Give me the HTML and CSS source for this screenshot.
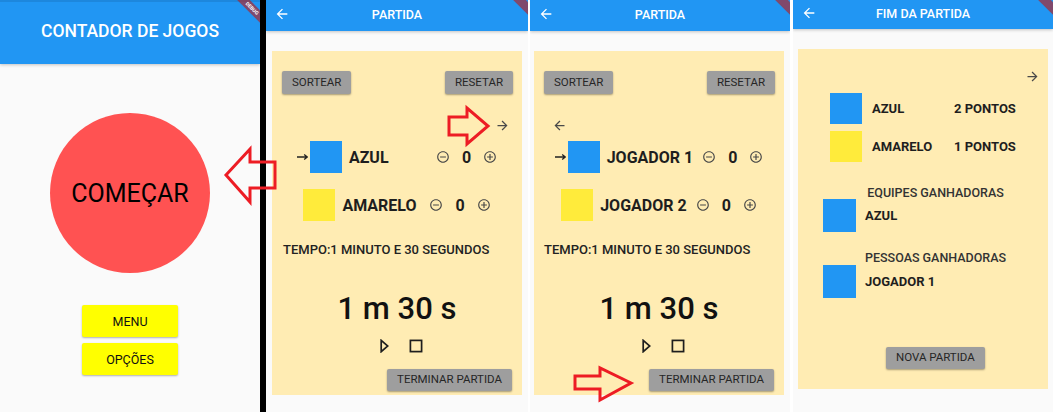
FILE: index.html
```html
<!DOCTYPE html>
<html lang="pt">
<head>
<meta charset="utf-8">
<title>Contador de Jogos</title>
<link rel="stylesheet" href="styles.css">
</head>
<body>
<div class="screen">

  <section class="phone phone-home">
    <header class="appbar appbar-home"><h1>CONTADOR DE JOGOS</h1></header>
    <div class="debug debug-wide">DEBUG</div>
    <main class="home-body">
      <button class="start">COMEÇAR</button>
      <div class="menu-btns">
        <button class="yellow-btn">MENU</button>
        <button class="yellow-btn">OPÇÕES</button>
      </div>
    </main>
  </section>

  <div class="divider"></div>

  <section class="phone phone-a">
    <header class="appbar">
      <svg class="back" viewBox="0 0 24 24" width="16" height="16"><path fill="#fff" d="M20 11H7.83l5.59-5.59L12 4l-8 8 8 8 1.41-1.41L7.83 13H20v-2z"/></svg>
      <h1>PARTIDA</h1>
    </header>
    <div class="debug"></div>
    <div class="card">
      <div class="btn-row"><button class="gray-btn">SORTEAR</button><button class="gray-btn">RESETAR</button></div>
      <div class="turn-row right"><svg viewBox="0 0 24 24" width="15" height="15"><path fill="#4a4a4a" d="M12 4l-1.41 1.41L16.17 11H4v2h12.17l-5.58 5.59L12 20l8-8z"/></svg></div>
      <div class="player-row">
        <svg class="lead" viewBox="0 0 11 8" width="11" height="8"><path d="M0 4H10M7.2 1.6L10.2 4L7.2 6.4" fill="none" stroke="#222" stroke-width="1.3"/></svg>
        <span class="sq blue"></span><span class="name">AZUL</span>
        <svg class="ctl" viewBox="0 0 24 24"><path d="M7 11v2h10v-2H7zm5-9C6.48 2 2 6.48 2 12s4.48 10 10 10 10-4.48 10-10S17.52 2 12 2zm0 18c-4.41 0-8-3.590-8-8s3.59-8 8-8 8 3.59 8 8-3.59 8-8 8z"/></svg>
        <span class="score">0</span>
        <svg class="ctl" viewBox="0 0 24 24"><path d="M13 7h-2v4H7v2h4v4h2v-4h4v-2h-4V7zm-1-5C6.48 2 2 6.48 2 12s4.48 10 10 10 10-4.48 10-10S17.52 2 12 2zm0 18c-4.41 0-8-3.59-8-8s3.59-8 8-8 8 3.59 8 8-3.59 8-8 8z"/></svg>
      </div>
      <div class="player-row">
        <span class="sq yellow"></span><span class="name">AMARELO</span>
        <svg class="ctl" viewBox="0 0 24 24"><path d="M7 11v2h10v-2H7zm5-9C6.48 2 2 6.48 2 12s4.48 10 10 10 10-4.48 10-10S17.52 2 12 2zm0 18c-4.41 0-8-3.59-8-8s3.59-8 8-8 8 3.59 8 8-3.59 8-8 8z"/></svg>
        <span class="score">0</span>
        <svg class="ctl" viewBox="0 0 24 24"><path d="M13 7h-2v4H7v2h4v4h2v-4h4v-2h-4V7zm-1-5C6.48 2 2 6.48 2 12s4.48 10 10 10 10-4.48 10-10S17.52 2 12 2zm0 18c-4.41 0-8-3.59-8-8s3.59-8 8-8 8 3.59 8 8-3.59 8-8 8z"/></svg>
      </div>
      <div class="tempo">TEMPO:1 MINUTO E 30 SEGUNDOS</div>
      <div class="clock">1 m 30 s</div>
      <div class="media">
        <svg viewBox="0 0 9 14" width="9" height="14"><path d="M1.2 1.3L7.8 7L1.2 12.7Z" fill="none" stroke="#1e1e1e" stroke-width="1.7" stroke-linejoin="miter"/></svg>
        <svg viewBox="0 0 14 14" width="14" height="14"><rect x="1.4" y="1.4" width="11.2" height="11.2" fill="none" stroke="#1e1e1e" stroke-width="1.7"/></svg>
      </div>
      <button class="gray-btn end-btn">TERMINAR PARTIDA</button>
    </div>
  </section>

  <div class="gap gap-2"></div>

  <section class="phone phone-b">
    <header class="appbar">
      <svg class="back" viewBox="0 0 24 24" width="16" height="16"><path fill="#fff" d="M20 11H7.83l5.59-5.59L12 4l-8 8 8 8 1.41-1.41L7.83 13H20v-2z"/></svg>
      <h1>PARTIDA</h1>
    </header>
    <div class="debug"></div>
    <div class="card card-b">
      <div class="btn-row"><button class="gray-btn">SORTEAR</button><button class="gray-btn">RESETAR</button></div>
      <div class="turn-row left"><svg viewBox="0 0 24 24" width="15" height="15"><path fill="#4a4a4a" d="M20 11H7.83l5.59-5.59L12 4l-8 8 8 8 1.41-1.41L7.83 13H20v-2z"/></svg></div>
      <div class="player-row">
        <svg class="lead" viewBox="0 0 11 8" width="11" height="8"><path d="M0 4H10M7.2 1.6L10.2 4L7.2 6.4" fill="none" stroke="#222" stroke-width="1.3"/></svg>
        <span class="sq blue"></span><span class="name">JOGADOR 1</span>
        <svg class="ctl" viewBox="0 0 24 24"><path d="M7 11v2h10v-2H7zm5-9C6.48 2 2 6.48 2 12s4.48 10 10 10 10-4.48 10-10S17.52 2 12 2zm0 18c-4.41 0-8-3.59-8-8s3.59-8 8-8 8 3.59 8 8-3.59 8-8 8z"/></svg>
        <span class="score">0</span>
        <svg class="ctl" viewBox="0 0 24 24"><path d="M13 7h-2v4H7v2h4v4h2v-4h4v-2h-4V7zm-1-5C6.48 2 2 6.48 2 12s4.48 10 10 10 10-4.48 10-10S17.52 2 12 2zm0 18c-4.41 0-8-3.59-8-8s3.59-8 8-8 8 3.59 8 8-3.59 8-8 8z"/></svg>
      </div>
      <div class="player-row">
        <span class="sq yellow"></span><span class="name">JOGADOR 2</span>
        <svg class="ctl" viewBox="0 0 24 24"><path d="M7 11v2h10v-2H7zm5-9C6.48 2 2 6.48 2 12s4.48 10 10 10 10-4.48 10-10S17.52 2 12 2zm0 18c-4.41 0-8-3.59-8-8s3.59-8 8-8 8 3.59 8 8-3.59 8-8 8z"/></svg>
        <span class="score">0</span>
        <svg class="ctl" viewBox="0 0 24 24"><path d="M13 7h-2v4H7v2h4v4h2v-4h4v-2h-4V7zm-1-5C6.48 2 2 6.48 2 12s4.48 10 10 10 10-4.48 10-10S17.52 2 12 2zm0 18c-4.41 0-8-3.59-8-8s3.59-8 8-8 8 3.59 8 8-3.59 8-8 8z"/></svg>
      </div>
      <div class="tempo tempo-b">TEMPO:1 MINUTO E 30 SEGUNDOS</div>
      <div class="clock">1 m 30 s</div>
      <div class="media">
        <svg viewBox="0 0 9 14" width="9" height="14"><path d="M1.2 1.3L7.8 7L1.2 12.7Z" fill="none" stroke="#1e1e1e" stroke-width="1.7" stroke-linejoin="miter"/></svg>
        <svg viewBox="0 0 14 14" width="14" height="14"><rect x="1.4" y="1.4" width="11.2" height="11.2" fill="none" stroke="#1e1e1e" stroke-width="1.7"/></svg>
      </div>
      <button class="gray-btn end-btn">TERMINAR PARTIDA</button>
    </div>
  </section>

  <div class="gap gap-3"></div>

  <section class="phone phone-c">
    <header class="appbar appbar-c">
      <svg class="back" viewBox="0 0 24 24" width="16" height="16"><path fill="#fff" d="M20 11H7.83l5.59-5.59L12 4l-8 8 8 8 1.41-1.41L7.83 13H20v-2z"/></svg>
      <h1>FIM DA PARTIDA</h1>
    </header>
    <div class="debug"></div>
    <div class="card card-c">
      <div class="turn-row right end-turn"><svg viewBox="0 0 24 24" width="15" height="15"><path fill="#4a4a4a" d="M12 4l-1.41 1.41L16.17 11H4v2h12.17l-5.58 5.59L12 20l8-8z"/></svg></div>
      <div class="score-row"><span class="sq sq-s blue"></span><span class="label">AZUL</span><span class="pts">2 PONTOS</span></div>
      <div class="score-row"><span class="sq sq-s yellow"></span><span class="label">AMARELO</span><span class="pts">1 PONTOS</span></div>
      <div class="win-title">EQUIPES GANHADORAS</div>
      <div class="win-row"><span class="sq sq-w blue"></span><span class="win-name">AZUL</span></div>
      <div class="win-title win-title-2">PESSOAS GANHADORAS</div>
      <div class="win-row win-row-2"><span class="sq sq-w blue"></span><span class="win-name">JOGADOR 1</span></div>
      <button class="gray-btn new-btn">NOVA PARTIDA</button>
    </div>
  </section>

  <svg class="annot" width="1053" height="412" viewBox="0 0 1053 412">
    <polygon points="226,175 250,149 250,162 275,162 275,188 250,188 250,202"/>
    <polygon points="449,117 467,117 467,108 488,126 467,144 467,135 449,135"/>
    <polygon points="575,376 600,376 600,368 631,383 600,400 600,389 575,389"/>
  </svg>
</div>
</body>
</html>
```

FILE: styles.css
```css
* { box-sizing: border-box; }

body {
  margin: 0;
  width: 1053px;
  height: 412px;
  overflow: hidden;
  font-family: Roboto, "Noto Sans", "Liberation Sans", sans-serif;
  background: #fff;
}

.screen {
  position: relative;
  display: flex;
  height: 412px;
  background: #fff;
}

.phone {
  position: relative;
  overflow: hidden;
  flex: none;
  height: 412px;
  display: flex;
  flex-direction: column;
  background: #fafafa;
}

.phone-home { width: 260px; }
.phone-a { width: 262px; }
.phone-b { width: 260px; }
.phone-c { width: 260px; }

.divider { flex: none; width: 6px; background: #000; }
.gap { flex: none; background: #fff; }
.gap-2 { width: 2px; }
.gap-3 { width: 3px; }

/* App bars */
.appbar {
  position: relative;
  z-index: 1;
  flex: none;
  height: 31px;
  padding-bottom: 3px;
  display: grid;
  grid-template-columns: 1fr auto 1fr;
  align-items: center;
  background: #2196f3;
  color: #fff;
  box-shadow: 0 1px 3px rgba(0, 0, 0, 0.22);
}

.appbar h1 {
  grid-column: 2;
  margin: 0;
  font-size: 12.5px;
  font-weight: 500;
  white-space: nowrap;
}

.appbar .back {
  grid-column: 1;
  grid-row: 1;
  display: block;
  margin-left: 8px;
}

.appbar-c { height: 29px; }

.appbar-home {
  height: 64px;
  display: flex;
  justify-content: center;
  border-top: 2px solid #1d87dd;
  padding-bottom: 4px;
}

.appbar-home h1 {
  font-size: 17.5px;
  font-weight: 500;
}

/* Debug ribbon */
.debug {
  position: absolute;
  z-index: 2;
  top: -0.5px;
  right: -26px;
  width: 60px;
  height: 9px;
  transform: rotate(45deg);
  background: rgba(183, 28, 28, 0.63);
  color: #fff;
  font-size: 5px;
  font-weight: 700;
  line-height: 9px;
  text-align: center;
}

.debug-wide {
  top: 3.5px;
  right: -22px;
}

/* Home screen */
.home-body {
  display: flex;
  flex-direction: column;
  align-items: center;
}

.start {
  margin-top: 49px;
  width: 160px;
  height: 160px;
  padding: 0;
  border: none;
  border-radius: 50%;
  background: #ff5252;
  color: #000;
  font-family: inherit;
  font-size: 25px;
  font-weight: 400;
}

.menu-btns {
  margin-top: 32px;
  display: flex;
  flex-direction: column;
  gap: 6px;
}

.yellow-btn {
  width: 96px;
  height: 32px;
  padding: 0;
  border: none;
  border-radius: 2px;
  background: #ffff00;
  box-shadow: 0 1px 2px rgba(0, 0, 0, 0.3);
  color: #111;
  font-family: inherit;
  font-size: 12.5px;
}

/* Cards */
.card {
  flex: none;
  display: flex;
  flex-direction: column;
  height: 344px;
  margin: 20px 6px 0;
  background: #ffecb3;
}

.card-b { margin-left: 4px; }

.card-c {
  height: 340px;
  margin: 20px 5px 0;
}

.gray-btn {
  height: 23px;
  padding: 0 10px;
  border: none;
  border-radius: 2px;
  background: #9e9e9e;
  box-shadow: 0 1px 2px rgba(0, 0, 0, 0.35);
  color: #262626;
  font-family: inherit;
  font-size: 11.5px;
  line-height: 1;
  white-space: nowrap;
}

.btn-row {
  display: flex;
  justify-content: space-between;
  margin-top: 20px;
  padding: 0 9px 0 10px;
}

.turn-row {
  display: flex;
  height: 15px;
  margin-top: 24px;
}

.turn-row svg { display: block; }
.turn-row.right { justify-content: flex-end; padding-right: 12px; }
.turn-row.left { padding-left: 18px; }
.turn-row.end-turn { margin-top: 20px; padding-right: 8px; }

.player-row {
  display: flex;
  justify-content: center;
  align-items: center;
  height: 32px;
  margin-top: 8px;
}

.player-row + .player-row { margin-top: 16px; }

.lead { flex: none; margin-right: 2px; }

.sq { flex: none; display: block; width: 32px; height: 32px; }
.blue { background: #2196f3; }
.yellow { background: #ffeb3b; }

.name {
  min-width: 78px;
  margin: 0 9px 0 7px;
  font-size: 16px;
  font-weight: 700;
  color: #1e1e1e;
  white-space: nowrap;
}

.score {
  margin: 0 12px;
  font-size: 16px;
  font-weight: 700;
  color: #1e1e1e;
}

.ctl {
  flex: none;
  width: 14px;
  height: 14px;
  fill: #474747;
}

.tempo {
  margin-top: 21px;
  padding-left: 11px;
  font-size: 13px;
  font-weight: 500;
  line-height: 16px;
  color: #222;
  white-space: nowrap;
}

.tempo-b { padding-left: 10px; }

.clock {
  margin-top: 32px;
  text-align: center;
  font-size: 31px;
  font-weight: 500;
  line-height: 38px;
  color: #111;
}

.media {
  display: flex;
  justify-content: center;
  gap: 20px;
  height: 14px;
  margin-top: 11px;
  padding-left: 9px;
}

.media svg { display: block; }

.end-btn {
  align-self: flex-end;
  height: 22px;
  margin: 16px 10px 0 0;
}

/* End of match */
.score-row {
  display: flex;
  align-items: center;
  margin-top: 9px;
  padding-left: 32px;
}

.score-row + .score-row { margin-top: 7px; }

.sq-s { height: 31px; }

.label {
  width: 82px;
  margin-left: 10px;
  font-size: 13px;
  font-weight: 700;
  color: #1e1e1e;
}

.pts {
  font-size: 13px;
  font-weight: 700;
  color: #1e1e1e;
  white-space: nowrap;
}

.win-title {
  width: 145px;
  margin: 25px 0 0 65px;
  text-align: center;
  font-size: 12.5px;
  font-weight: 500;
  line-height: 12px;
  color: #333;
  white-space: nowrap;
}

.win-title-2 { margin-top: 20px; }

.win-row {
  display: flex;
  align-items: center;
  padding-left: 25px;
}

.win-row-2 { margin-top: 1px; }

.sq-w { width: 33px; height: 33px; }

.win-name {
  margin-left: 9px;
  font-size: 13px;
  font-weight: 700;
  color: #1e1e1e;
}

.new-btn {
  align-self: flex-start;
  height: 22px;
  margin: 49px 0 0 88px;
}

/* Annotation arrows drawn over the screenshots */
.annot {
  position: absolute;
  top: 0;
  left: 0;
  z-index: 10;
  pointer-events: none;
}

.annot polygon {
  fill: none;
  stroke: #ed1c24;
  stroke-width: 3;
  stroke-linejoin: miter;
}
```
